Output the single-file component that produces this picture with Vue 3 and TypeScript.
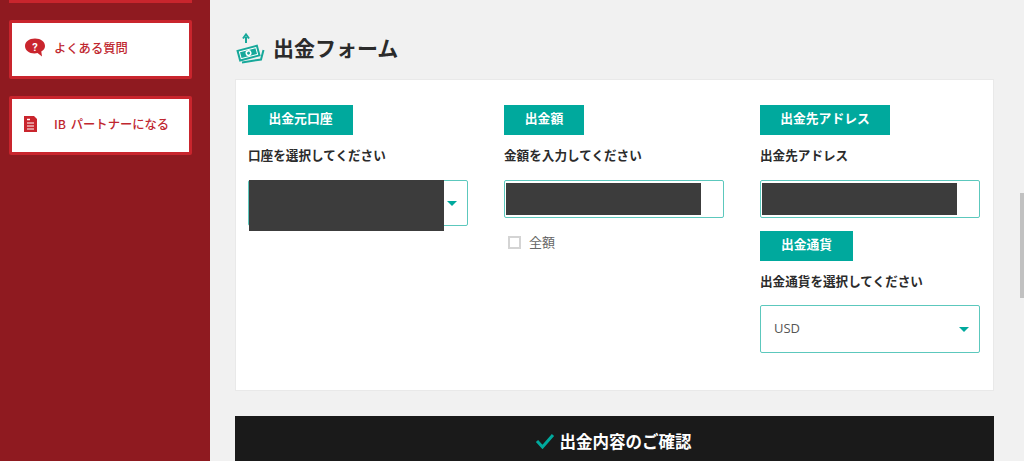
<script setup lang="ts">
const side = [
  { label: 'よくある質問', kind: 'q' },
  { label: 'IB パートナーになる', kind: 'doc' },
]
</script>

<template>
  <div class="page">
    <aside class="sidebar">
      <div class="stub"></div>
      <a v-for="s in side" :key="s.label" class="card">
        <svg v-if="s.kind === 'q'" class="ic" width="22" height="20" viewBox="0 0 22 20">
          <path d="M11 0.500C5 0.500 1 3.800 1 8c0 4.200 4 7.500 9.500 7.500 1.200 0 2 0 3-.4l4.500 3.400-.7-5C20 12 21 10 21 8c0-4.200-4-7.500-10-7.500z" fill="#c9252d"/>
          <text x="11" y="12.500" text-anchor="middle" font-size="11" font-weight="700" fill="#fff" font-family="Roboto, sans-serif">?</text>
        </svg>
        <svg v-else class="ic" width="22" height="16" viewBox="2 1 22 16">
          <path d="M2 1h10l3 3v13H2z" fill="#c9252d"/>
          <path d="M5 8h7M5 11h7M5 14h7" stroke="#fff" stroke-width="1"/>
          <path d="M5 4.500h3" stroke="#fff" stroke-width="1.500"/>
        </svg>
        <span class="card-text" :class="s.kind">{{ s.label }}</span>
      </a>
    </aside>

    <main class="main">
      <header class="title">
        <svg width="30" height="32" viewBox="0 0 30 32">
          <path d="M11 11V5M8 6.500L11 2.500l3 4" fill="none" stroke="#17a89a" stroke-width="2"/>
          <g transform="rotate(-15 14 21)">
            <rect x="2.500" y="15" width="22" height="12" fill="#17a89a"/>
            <rect x="5" y="17.500" width="17" height="7" fill="none" stroke="#fff" stroke-width="1"/>
            <circle cx="13.500" cy="21" r="3" fill="#fff"/>
            <circle cx="13.500" cy="21" r="1.500" fill="#17a89a"/>
          </g>
          <path d="M7 30.500l19-3 2.500-9.500" fill="none" stroke="#17a89a" stroke-width="2"/>
        </svg>
        <h1>出金フォーム</h1>
      </header>

      <section class="panel">
        <div class="col">
          <div class="tag w105">出金元口座</div>
          <p class="label">口座を選択してください</p>
          <div class="select h46">
            <span class="arrow"></span>
            <div class="redact r1"></div>
          </div>
        </div>

        <div class="col">
          <div class="tag w80">出金額</div>
          <p class="label">金額を入力してください</p>
          <div class="input">
            <div class="redact r2"></div>
          </div>
          <label class="check"><span class="box"></span><span>全額</span></label>
        </div>

        <div class="col">
          <div class="tag w130">出金先アドレス</div>
          <p class="label">出金先アドレス</p>
          <div class="input">
            <div class="redact r2"></div>
          </div>
          <div class="tag w93 second">出金通貨</div>
          <p class="label tight">出金通貨を選択してください</p>
          <div class="select h47">
            <span class="value">USD</span>
            <span class="arrow"></span>
          </div>
        </div>
      </section>

      <button class="confirm">
        <svg width="20" height="16" viewBox="0 0 20 16">
          <path d="M2 8l5.500 6L18 2" fill="none" stroke="#00a99d" stroke-width="3"/>
        </svg>
        <span>出金内容のご確認</span>
      </button>
    </main>

    <div class="scroll-thumb"></div>
  </div>
</template>

<style>
html, body { margin: 0; overflow: hidden; background: #f1f1f1; }
</style>

<style scoped>
.page {
  position: relative;
  display: flex;
  height: 461px;
  overflow: hidden;
  background: #f1f1f1;
  font-family: "Noto Sans CJK JP", "Noto Sans", sans-serif;
  color: #2b2b2b;
}
.sidebar {
  width: 210px;
  flex: none;
  box-sizing: border-box;
  background: #8f1a20;
  padding: 0 18px 0 9px;
  display: flex;
  flex-direction: column;
  gap: 17px;
}
.stub {
  height: 3px;
  background: #c9252d;
}
.card {
  box-sizing: border-box;
  height: 59px;
  background: #fff;
  border: 3px solid #c9252d;
  display: flex;
  align-items: center;
  padding: 0 0 4px 12px;
  border-radius: 2px;
}
.ic { flex: none; margin-right: 8px; }
.card-text {
  color: #c0272f;
  font-size: 12.300px;
  font-weight: 500;
  white-space: nowrap;
  word-spacing: 2px;
}
.main {
  width: 759px;
  margin-left: 25px;
  flex: none;
}
.title {
  display: flex;
  align-items: center;
  gap: 8px;
  height: 79px;
  padding-top: 16px;
  box-sizing: border-box;
}
.title h1 {
  margin: 0;
  font-size: 21px;
  font-weight: 700;
  color: #2b2b2b;
  line-height: 1;
}
.panel {
  box-sizing: border-box;
  height: 312px;
  background: #fff;
  border: 1px solid #e9e9e9;
  padding: 25px 12px 0;
  display: grid;
  grid-template-columns: 220px 220px 220px;
  column-gap: 36px;
}
.col { display: flex; flex-direction: column; align-items: flex-start; }
.tag {
  box-sizing: border-box;
  height: 30px;
  padding-bottom: 5px;
  background: #00a99d;
  color: #fff;
  font-size: 12.800px;
  font-weight: 700;
  display: flex;
  align-items: center;
  justify-content: center;
}
.w105 { width: 105px; }
.w80 { width: 80px; }
.w130 { width: 130px; }
.w93 { width: 93px; }
.second { margin-top: 13px; }
.label {
  margin: 10px 0 0;
  height: 29px;
  line-height: 20px;
  font-size: 12.600px;
  font-weight: 700;
  color: #2b2b2b;
  white-space: nowrap;
  margin-bottom: 6px;
}
.label.tight { margin-bottom: 5px; }
.select, .input {
  position: relative;
  box-sizing: border-box;
  width: 220px;
  background: #fff;
  border: 1px solid #5cc8bd;
  border-radius: 2px;
}
.h46 { height: 46px; }
.h47 { height: 48px; }
.select { display: flex; align-items: center; padding: 0 13px; }
.input { height: 38px; }
.value { font-size: 13px; color: #555; font-family: "Open Sans", sans-serif; padding-bottom: 3px; }
.arrow {
  margin-left: auto;
  margin-right: -3px;
  width: 0;
  height: 0;
  border-left: 5.500px solid transparent;
  border-right: 5.500px solid transparent;
  border-top: 5px solid #00a99d;
}
.redact { position: absolute; background: #3c3c3c; }
.r1 { left: 0; top: -1px; width: 195px; height: 51px; }
.r2 { left: 1px; top: 2px; width: 195px; height: 32px; }
.check {
  display: flex;
  align-items: center;
  gap: 8px;
  margin: 16px 0 0 4px;
  font-size: 13px;
  color: #666;
  line-height: 16px;
}
.box {
  box-sizing: border-box;
  width: 13px;
  height: 13px;
  border: 2px solid #d4d4d4;
}
.confirm {
  width: 759px;
  height: 60px;
  margin-top: 25px;
  display: flex;
  align-items: center;
  justify-content: center;
  padding: 0 3px 10px 0;
  gap: 5px;
  border: 0;
  background: #1a1a1a;
  color: #fff;
  font-family: inherit;
  font-size: 16.500px;
  font-weight: 700;
}
.scroll-thumb {
  position: absolute;
  right: 0;
  top: 193px;
  width: 4px;
  height: 105px;
  background: #c1c1c1;
}
</style>
